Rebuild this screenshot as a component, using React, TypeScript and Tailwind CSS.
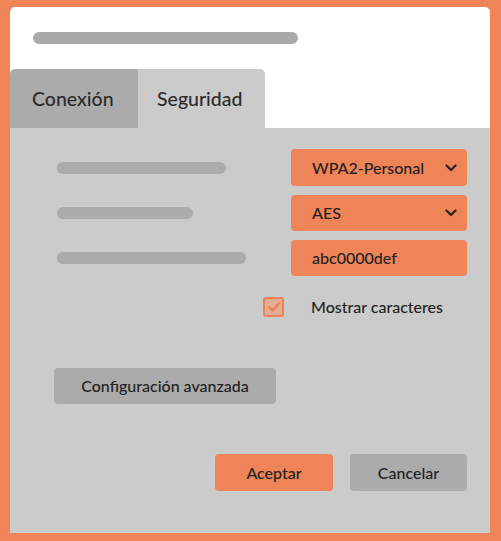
import React from "react";

const font = { fontFamily: "Lato, 'Open Sans', sans-serif" };

function Chevron() {
  return (
    <svg width="12" height="8" viewBox="0 0 12 8" className="shrink-0">
      <path d="M1.5 1.5 L6 6 L10.5 1.5" fill="none" stroke="#2a2522" strokeWidth="2.2" strokeLinecap="round" strokeLinejoin="round" />
    </svg>
  );
}

export default function App() {
  return (
    <div className="w-[501px] h-[541px] bg-[#ef8459] pt-[7px] px-[10px] font-medium" style={font}>
      <div className="w-[480px] h-[526px] rounded-t-[5px] overflow-hidden flex flex-col">
        <div className="bg-white h-[121px] flex flex-col">
          <div className="mt-[25px] ml-[23px] w-[265px] h-[12px] rounded-full bg-[#a9a9a9]" />
          <div className="mt-auto flex h-[59px]">
            <div className="w-[128px] bg-[#ababab] rounded-tl-[5px] flex items-center pl-[22px] text-[19.5px] text-[#2b2b2b]">
              Conexión
            </div>
            <div className="w-[127px] bg-[#cbcbcb] rounded-tr-[5px] flex items-center pl-[19px] text-[19.5px] text-[#2b2b2b]">
              Seguridad
            </div>
          </div>
        </div>
        <div className="flex-1 bg-[#cbcbcb] flex flex-col pt-[21px] text-[#222222]">
          <div className="flex flex-col gap-[9px] pl-[47px] pr-[23px]">
            <div className="flex items-center justify-between h-[37px]">
              <div className="w-[169px] h-[12px] rounded-full bg-[#ababab]" />
              <div className="w-[176px] h-full rounded-[4px] bg-[#ef8459] flex items-center justify-between pl-[21px] pr-[10px] text-[16px]">
                <span>WPA2-Personal</span>
                <Chevron />
              </div>
            </div>
            <div className="flex items-center justify-between h-[36px]">
              <div className="w-[136px] h-[12px] rounded-full bg-[#ababab]" />
              <div className="w-[176px] h-full rounded-[4px] bg-[#ef8459] flex items-center justify-between pl-[21px] pr-[10px] text-[16px]">
                <span>AES</span>
                <Chevron />
              </div>
            </div>
            <div className="flex items-center justify-between h-[36px]">
              <div className="w-[189px] h-[12px] rounded-full bg-[#ababab]" />
              <div className="w-[176px] h-full rounded-[4px] bg-[#ef8459] flex items-center pl-[21px] text-[16px]">
                <span>abc0000def</span>
              </div>
            </div>
          </div>
          <div className="flex items-center mt-[21px] ml-[253px] h-[20px]">
            <div className="w-[21px] h-[20px] rounded-[3px] border-2 border-[#ee8256] bg-[#e4ae96] flex items-center justify-center">
              <svg width="14" height="12" viewBox="0 0 14 12">
                <path d="M2 6 L5.5 9.5 L12 2.5" fill="none" stroke="#ee8256" strokeWidth="2.4" strokeLinecap="round" strokeLinejoin="round" />
              </svg>
            </div>
            <span className="ml-[27px] text-[16px]">Mostrar caracteres</span>
          </div>
          <div className="mt-[51px] ml-[44px] w-[222px] h-[36px] rounded-[4px] bg-[#ababab] flex items-center justify-center text-[16px]">
            Configuración avanzada
          </div>
          <div className="mt-[50px] flex justify-end gap-[17px] pr-[23px]">
            <div className="w-[118px] h-[37px] rounded-[4px] bg-[#ef8459] flex items-center justify-center text-[16px]">
              Aceptar
            </div>
            <div className="w-[117px] h-[37px] rounded-[4px] bg-[#ababab] flex items-center justify-center text-[16px]">
              Cancelar
            </div>
          </div>
        </div>
      </div>
    </div>
  );
}
